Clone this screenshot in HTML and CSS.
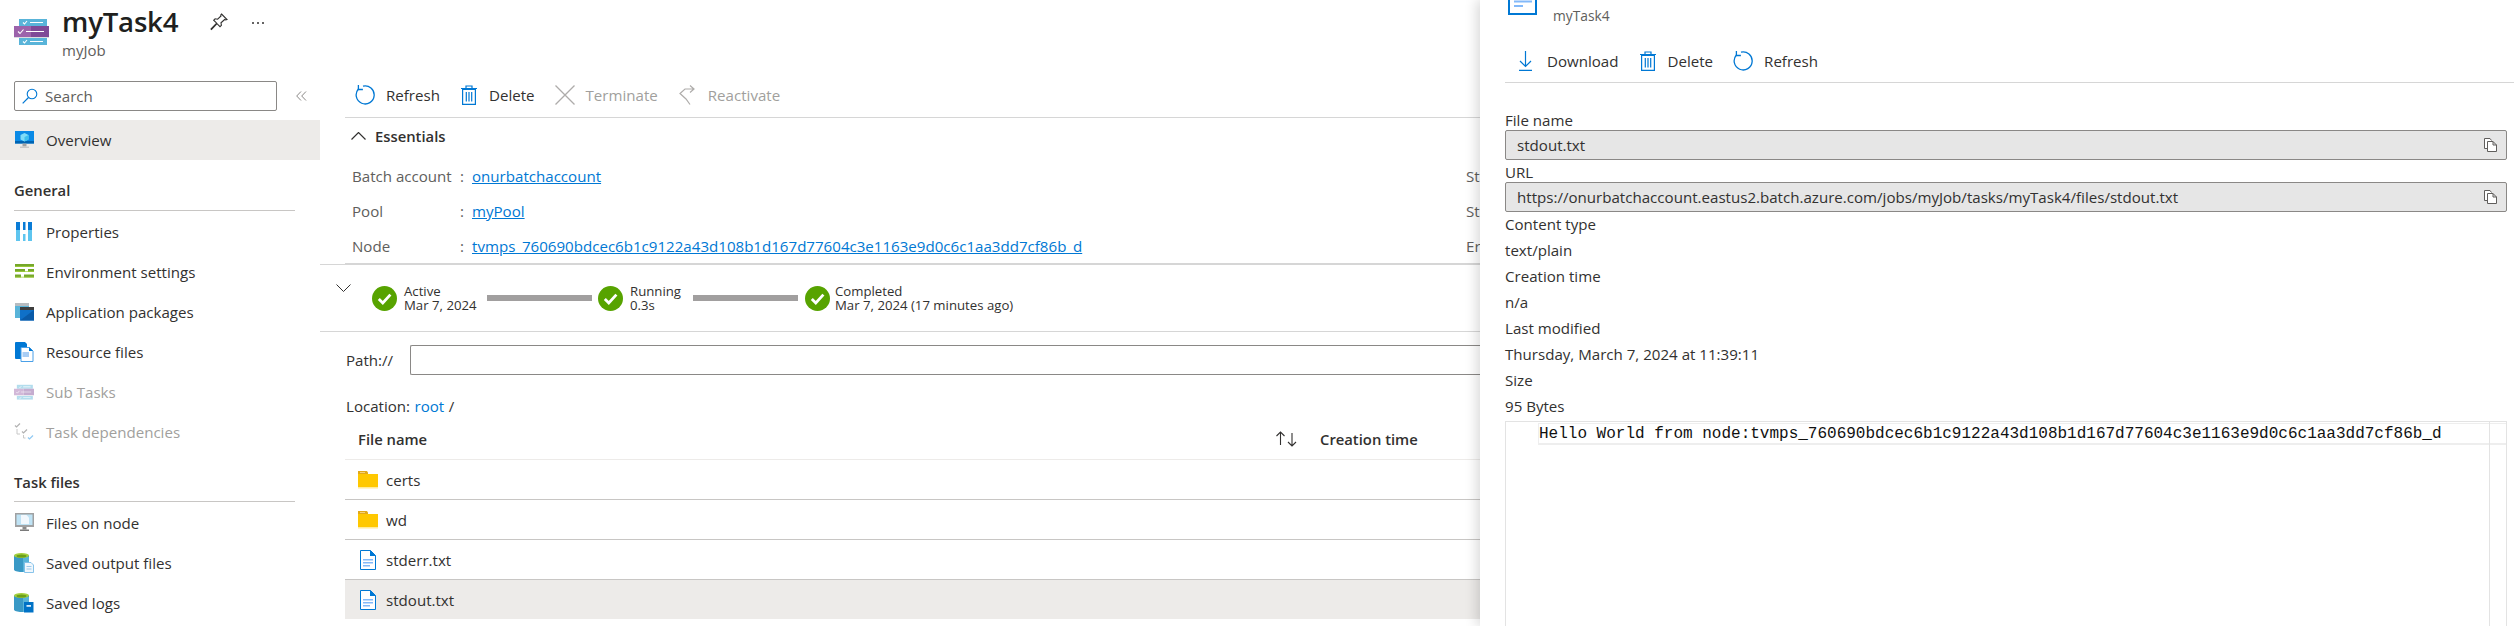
FILE: index.html
```html
<!DOCTYPE html>
<html lang="en">
<head>
<meta charset="utf-8">
<title>myTask4</title>
<link rel="stylesheet" href="styles.css">
</head>
<body>
<svg class="defs" width="0" height="0" aria-hidden="true">
  <defs>
    <symbol id="i-refresh" viewBox="0 0 20 20"><path d="M8 1.200A9 9 0 1 1 3.400 4" fill="none" stroke="#0078d4" stroke-width="1.300"/><path d="M3.400 0v4.500h4.500" fill="none" stroke="#0078d4" stroke-width="1.300"/></symbol>
    <symbol id="i-trash" viewBox="0 0 16 20"><path d="M1.600 4.500h12.800V19.400H1.600zM0 3.500h16M5 3.300V1h6v2.300M5.300 7v9.500M8 7v9.500M10.700 7v9.500" fill="none" stroke="#0078d4" stroke-width="1.200"/></symbol>
    <symbol id="i-check" viewBox="0 0 25 25"><circle cx="12.500" cy="12.500" r="12.500" fill="#57a300"/><path d="M6.800 13l4 4 7.600-8.400" fill="none" stroke="#fff" stroke-width="2.800"/></symbol>
    <symbol id="i-folder" viewBox="0 0 20 18"><path d="M0 1h8.500l1.500 2h10v13.600H0z" fill="#ffc800"/><path d="M0 0h8.800l1.200 1.200V3H0z" fill="#e2a91a"/><path d="M2 1h5v1H2z" fill="#f4d27a"/><path d="M0 16.600h20V18H0z" fill="#fff4c8"/></symbol>
    <symbol id="i-doc" viewBox="0 0 16 20"><path d="M.5.500h10l5 5v14H.5z" fill="#fff" stroke="#0078d4"/><path d="M10 0l6 6h-6z" fill="#0078d4"/><path d="M3 9h10v1.600H3zM3 12h10v1.600H3zM3 15h7v1.600H3z" fill="#83b9f9"/></symbol>
    <symbol id="i-task" viewBox="0 0 35 27"><path d="M5 1h28v7H5zM5 20h28v7H5z" fill="#59b4d9"/><path d="M0 8h17v11H0z" fill="#9c63ab"/><path d="M17 8h18v11H17z" fill="#7f4a97"/><path d="M0 19h35v1H0z" fill="#dcdce0"/><path d="M9 4.500l1.500 1.500 2.500-3M9 23.500l1.500 1.500 2.500-3M4 13.500l2 2 3.500-4" fill="none" stroke="#fff" stroke-width="1.100"/><path d="M16 4h13v1H16zM16 23h13v1H16zM12 13h18v1H12z" fill="#fff"/></symbol>
    <symbol id="i-copy" viewBox="0 0 14 14"><path d="M3.500 10.500H.5V.5h5.500l1.500 2M3.500 3.500H9l3.500 3.500v6.500h-9zM9 3.500V7h3.500" fill="#fff" stroke="#605e5c"/></symbol>
    <symbol id="i-can" viewBox="0 0 15 19"><path d="M0 2.500h15V16.500c0 1.400-3.400 2.500-7.500 2.500S0 17.900 0 16.500z" fill="#3999c6"/><path d="M9 4h6v12.500c0 1.400-2.700 2.500-6 2.500z" fill="#59b4d9"/><ellipse cx="7.500" cy="2.500" rx="7.500" ry="2.500" fill="#a4cf3e"/><ellipse cx="7.500" cy="3" rx="5" ry="1.500" fill="#6ca01a"/></symbol>
  </defs>
</svg>

<div class="blade">
  <header class="head">
    <svg class="head-logo" width="35" height="27"><use href="#i-task"/></svg>
    <div class="head-titles">
      <h1 class="title">myTask4</h1>
      <div class="subtitle">myJob</div>
    </div>
    <svg class="pin" width="18" height="18" viewBox="0 0 18 18"><path d="M11.500 1l5.500 5.500-1.300.5-1-.5-3.700 3.300.4 2.500-1.400 1.400-3-3L1.500 16.500 1 16l5.700-5.800-3-3 1.400-1.400 2.500.4L11 3l-.3-1z" fill="none" stroke="#323130" stroke-width="1.100"/></svg>
    <div class="more"><i></i><i></i><i></i></div>
  </header>

  <div class="columns">
    <nav class="nav">
      <div class="search-row">
        <div class="search">
          <svg width="16" height="16" viewBox="0 0 16 16"><circle cx="10" cy="6" r="4.800" fill="none" stroke="#0078d4" stroke-width="1.100"/><path d="M6.500 9.500L.7 15.300" stroke="#0078d4" stroke-width="1.200"/></svg>
          <span>Search</span>
        </div>
        <svg class="collapse" width="11" height="10" viewBox="0 0 11 10"><path d="M5 .5L.7 5 5 9.500M10 .5L5.700 5l4.300 4.500" fill="none" stroke="#8a8886"/></svg>
      </div>

      <a class="nav-item is-selected">
        <svg width="20" height="20" viewBox="0 0 20 20"><path d="M1 1h19v12.500H1z" fill="#0a8ae6"/><path d="M1 11h19v2.500H1z" fill="#0063b1"/><path d="M10.500 3l4 2v4.500l-4 2-4-2V5z" fill="#7fdcf8"/><path d="M10.500 7v4.500l4-2V5z" fill="#3ec0ee"/><path d="M8.500 13.500h4v3h-4z" fill="#a0a1a2"/><path d="M6 16.500h9V18H6z" fill="#c8c8c8"/></svg>
        <span>Overview</span>
      </a>

      <h2 class="nav-heading">General</h2>
      <ul class="nav-list">
        <li><a class="nav-item">
          <svg width="20" height="20" viewBox="0 0 20 20"><path d="M2 0h4v8H2zM9 0h2.500v8H9zM14 0h4v8h-4z" fill="#0a7cd6"/><path d="M2 8h4v11H2zM9 12h2.500v7H9zM14 8h4v11h-4z" fill="#5ec5ef"/><path d="M9 8h2.500v4H9z" fill="#fff"/></svg>
          <span>Properties</span></a></li>
        <li><a class="nav-item">
          <svg width="20" height="20" viewBox="0 0 20 20"><path d="M1 2h19v3H1zM1 7h10v3H1zM14 7h6v3h-6zM1 12.500h6v3H1zM10 12.500h10v3H10z" fill="#76a82a"/><path d="M1 4.300h19V5H1zM1 9.300h19v.7H1zM1 14.800h19v.7H1z" fill="#a4cf3e"/></svg>
          <span>Environment settings</span></a></li>
        <li><a class="nav-item">
          <svg width="20" height="20" viewBox="0 0 20 20"><path d="M1 1h14v3H1z" fill="#b7bcc0"/><path d="M1 4h14v12H1z" fill="#59b4d9"/><path d="M6 5h14v3H6z" fill="#3e3e3e"/><path d="M6 8h14v10.500H6z" fill="#0f70c8"/><path d="M6 18.500L20 8v10.500z" fill="#0a5aa8"/></svg>
          <span>Application packages</span></a></li>
        <li><a class="nav-item">
          <svg width="20" height="20" viewBox="0 0 20 20"><path d="M2 0h9l2 2v15H2a1 1 0 0 1-1-1V1a1 1 0 0 1 1-1z" fill="#0078d4"/><path d="M7 5.500h8.500l3.500 3.500v10.500H7z" fill="#fff" stroke="#4aa0e8"/><path d="M8.500 10h6.500v5H8.500z" fill="#a8cdf4"/><path d="M15 5l4 4h-4z" fill="#0078d4"/></svg>
          <span>Resource files</span></a></li>
        <li><a class="nav-item is-disabled">
          <svg class="faded" width="20" height="20" viewBox="0 0 35 35"><use href="#i-task" width="35" height="27" y="4"/></svg>
          <span>Sub Tasks</span></a></li>
        <li><a class="nav-item is-disabled">
          <svg class="faded" width="20" height="20" viewBox="0 0 20 20"><path d="M1 3.500l1.500 1.500L6 1.500" fill="none" stroke="#555" stroke-width="1.200"/><path d="M8 9.500l1.500 1.500L13 7.500" fill="none" stroke="#555" stroke-width="1.200"/><path d="M14 15.500l1.500 1.500L19 13.500" fill="none" stroke="#0a8ae6" stroke-width="1.200"/><path d="M3 7v5h3M9.500 13v3h2" fill="none" stroke="#888"/></svg>
          <span>Task dependencies</span></a></li>
      </ul>

      <h2 class="nav-heading nav-heading-b">Task files</h2>
      <ul class="nav-list">
        <li><a class="nav-item">
          <svg width="20" height="20" viewBox="0 0 20 20"><path d="M1 0h19v14H1z" fill="#a0a1a2"/><path d="M2.500 1.500h16V12h-16z" fill="#bfe3f5"/><path d="M7 2h5.500l2.500 2.500V11H7z" fill="#f2f8fd"/><path d="M8.500 14h4v2.500h-4z" fill="#8a8a8a"/><path d="M6 16.500h9V18H6z" fill="#7a7a7a"/></svg>
          <span>Files on node</span></a></li>
        <li><a class="nav-item">
          <svg width="20" height="20" viewBox="0 0 20 20"><use href="#i-can" width="15" height="19"/><path d="M10.500 9.500h6.500l2.500 2.500v7.500h-9z" fill="#f0f7fd" stroke="#7cbde8" stroke-width=".9"/><path d="M12.500 13.500h5M12.500 16h5" stroke="#9cc9ea"/></svg>
          <span>Saved output files</span></a></li>
        <li><a class="nav-item">
          <svg width="20" height="20" viewBox="0 0 20 20"><use href="#i-can" width="15" height="19"/><path d="M10 9h9.500v10.500H10z" fill="#0072c6"/><path d="M12.500 12h4.500v1.800h-4.500z" fill="#d6ecfb"/></svg>
          <span>Saved logs</span></a></li>
      </ul>
    </nav>

    <main class="main">
      <div class="toolbar">
        <button class="tool"><svg width="20" height="20"><use href="#i-refresh"/></svg><span>Refresh</span></button>
        <button class="tool tool-del"><svg width="16" height="20"><use href="#i-trash"/></svg><span>Delete</span></button>
        <button class="tool is-off"><svg width="20" height="20" viewBox="0 0 20 20"><path d="M.5.500l19 19M19.500.500l-19 19" stroke="#aeacaa" stroke-width="1.300"/></svg><span>Terminate</span></button>
        <button class="tool is-off"><svg width="18" height="20" viewBox="0 0 18 20"><path d="M11 .5l4 3.500-4 3.500M15 4H6L1 8.500 7 14l4 5.500" fill="none" stroke="#aeacaa" stroke-width="1.200"/></svg><span>Reactivate</span></button>
      </div>

      <section class="essentials">
        <div class="ess-head">
          <svg width="15" height="8" viewBox="0 0 15 8"><path d="M.5 7.500l7-7 7 7" fill="none" stroke="#323130" stroke-width="1.200"/></svg>
          <span>Essentials</span>
        </div>
        <div class="ess-grid">
          <dl class="ess-col">
            <dt>Batch account</dt><dd><b>:</b><a>onurbatchaccount</a></dd>
            <dt>Pool</dt><dd><b>:</b><a>myPool</a></dd>
            <dt>Node</dt><dd><b>:</b><a>tvmps_760690bdcec6b1c9122a43d108b1d167d77604c3e1163e9d0c6c1aa3dd7cf86b_d</a></dd>
          </dl>
          <div class="ess-right">
            <span>Start time</span>
            <span>State</span>
            <span>Error</span>
          </div>
        </div>
      </section>

      <section class="stages">
        <svg class="stage-caret" width="15" height="8" viewBox="0 0 15 8"><path d="M.5.500l7 7 7-7" fill="none" stroke="#323130"/></svg>
        <div class="stage stage-a"><svg width="25" height="25"><use href="#i-check"/></svg><div><div>Active</div><div>Mar 7, 2024</div></div></div>
        <div class="stage-bar"></div>
        <div class="stage stage-b"><svg width="25" height="25"><use href="#i-check"/></svg><div><div>Running</div><div>0.3s</div></div></div>
        <div class="stage-bar"></div>
        <div class="stage stage-c"><svg width="25" height="25"><use href="#i-check"/></svg><div><div>Completed</div><div>Mar 7, 2024 (17 minutes ago)</div></div></div>
      </section>

      <div class="path-row">
        <label>Path://</label>
        <div class="path-input"></div>
      </div>
      <div class="location">Location: <a>root</a> /</div>

      <div class="table">
        <div class="t-head">
          <span class="t-name">File name</span>
          <svg class="t-sort" width="22" height="16" viewBox="0 0 22 16"><path d="M4.500 14V1M.5 5l4-4 4 4M16 2v13M12 11l4 4 4-4" fill="none" stroke="#323130" stroke-width="1.100"/></svg>
          <span class="t-created">Creation time</span>
        </div>
        <div class="t-row"><svg width="20" height="18"><use href="#i-folder"/></svg><span>certs</span></div>
        <div class="t-row"><svg width="20" height="18"><use href="#i-folder"/></svg><span>wd</span></div>
        <div class="t-row"><svg class="t-doc" width="16" height="20"><use href="#i-doc"/></svg><span>stderr.txt</span></div>
        <div class="t-row is-selected"><svg class="t-doc" width="16" height="20"><use href="#i-doc"/></svg><span>stdout.txt</span></div>
      </div>
    </main>
  </div>
</div>

<aside class="panel">
  <div class="p-head">
    <svg class="p-icon" width="29" height="15" viewBox="0 0 29 15"><path d="M1 -6h27v20H1z" fill="#fff" stroke="#0078d4" stroke-width="2"/><path d="M6 .5h18v2H6zM6 5h9v2H6z" fill="#83b9f9"/></svg>
    <span>myTask4</span>
  </div>
  <div class="p-toolbar">
    <button class="tool tool-dl"><svg width="13" height="20" viewBox="0 0 13 20"><path d="M6.500 0v15M1 10l5.500 5.500L12 10M0 19.300h13" fill="none" stroke="#0078d4" stroke-width="1.200"/></svg><span>Download</span></button>
    <button class="tool tool-del"><svg width="16" height="20"><use href="#i-trash"/></svg><span>Delete</span></button>
    <button class="tool"><svg width="20" height="20"><use href="#i-refresh"/></svg><span>Refresh</span></button>
  </div>
  <div class="p-label p-first">File name</div>
  <div class="p-input"><span>stdout.txt</span><svg width="14" height="14"><use href="#i-copy"/></svg></div>
  <div class="p-label p-url">URL</div>
  <div class="p-input"><span>https://onurbatchaccount.eastus2.batch.azure.com/jobs/myJob/tasks/myTask4/files/stdout.txt</span><svg width="14" height="14"><use href="#i-copy"/></svg></div>
  <div class="p-label p-meta">Content type</div>
  <div class="p-label p-meta">text/plain</div>
  <div class="p-label p-meta">Creation time</div>
  <div class="p-label p-meta">n/a</div>
  <div class="p-label p-meta">Last modified</div>
  <div class="p-label p-meta">Thursday, March 7, 2024 at 11:39:11</div>
  <div class="p-label p-meta">Size</div>
  <div class="p-label p-meta">95 Bytes</div>
  <div class="editor">
    <div class="ed-line">Hello World from node:tvmps_760690bdcec6b1c9122a43d108b1d167d77604c3e1163e9d0c6c1aa3dd7cf86b_d</div>
    <div class="ed-rail"></div>
  </div>
</aside>
</body>
</html>
```
FILE: styles.css
```css
* { box-sizing: border-box; }
html, body { margin: 0; height: 100%; }
body {
  width: 2514px;
  height: 626px;
  overflow: hidden;
  position: relative;
  background: #fff;
  color: #323130;
  font-family: "Open Sans", "Noto Sans", sans-serif;
  font-size: 15.1px;
}
.defs { position: absolute; }
svg { display: block; flex: none; }
a { color: inherit; text-decoration: none; }
ul { list-style: none; margin: 0; padding: 0; }
h1, h2, dl, dd { margin: 0; }

.blade { width: 1480px; height: 626px; overflow: hidden; }
.head { height: 70px; display: flex; align-items: flex-start; padding-left: 14px; }
.head-logo { margin-top: 18px; }
.head-titles { margin-left: 13px; }
.title { font-size: 27.6px; font-weight: 600; line-height: 36px; margin-top: 3px; color: #201f1e; letter-spacing: -.2px; }
.subtitle { font-size: 15px; line-height: 18px; margin-top: 2px; color: #605e5c; }
.pin { margin: 13px 0 0 32px; }
.more { display: flex; gap: 3px; margin: 22px 0 0 24px; }
.more i { width: 2px; height: 2px; background: #323130; border-radius: 50%; }

.columns { display: flex; height: 556px; }
.nav { width: 320px; flex: none; padding-top: 11px; }
.search-row { display: flex; align-items: center; padding-left: 14px; height: 30px; margin-bottom: 9px; }
.search { width: 263px; height: 30px; border: 1px solid #8a8886; border-radius: 2px; display: flex; align-items: center; padding-left: 7px; gap: 7px; color: #605e5c; }
.collapse { margin-left: 19px; }
.nav-item { display: flex; align-items: center; height: 40px; padding-left: 14px; gap: 12px; }
.nav-item.is-selected { background: #edebe9; }
.nav-item.is-disabled { color: #a19f9d; }
.faded { opacity: .45; }
.nav-heading { font-size: 14.800px; font-weight: 600; height: 51px; line-height: 19px; padding-top: 21px; margin: 0 25px 1px 14px; border-bottom: 1px solid #c8c6c4; }
.nav-heading-b { height: 50px; }

.main { width: 1160px; flex: none; padding-left: 25px; overflow: hidden; }
.toolbar { height: 48px; border-bottom: 1px solid #d6d6d6; display: flex; align-items: center; padding: 3px 0 0 10px; }
.tool { display: flex; align-items: center; gap: 11px; padding: 0; border: 0; background: none; color: inherit; font: inherit; margin-right: 21px; }
.tool-del { gap: 12px; margin-right: 20px; }
.tool.is-off { color: #a19f9d; }
.essentials { height: 147px; border-bottom: 2px solid #d6d6d6; }
.ess-head { display: flex; align-items: center; gap: 9px; height: 36px; padding-left: 6px; font-weight: 600; font-size: 14.800px; }
.ess-grid { display: flex; padding: 4px 0 0 7px; }
.ess-col { width: 1114px; flex: none; display: grid; grid-template-columns: 108px 1fr; grid-auto-rows: 35px; align-items: center; color: #605e5c; }
.ess-col dd { display: flex; gap: 9px; }
.ess-col b { font-weight: 400; width: 3px; }
.ess-col a { color: #0078d4; text-decoration: underline; }
.ess-right { display: grid; grid-auto-rows: 35px; align-items: center; color: #605e5c; white-space: nowrap; }

.stages { margin: -1px 0 0 -25px; height: 68px; border-top: 1px solid #d6d6d6; border-bottom: 1px solid #d6d6d6; display: flex; align-items: center; position: relative; font-size: 13.200px; line-height: 14px; }
.stage-caret { position: absolute; left: 16px; top: 19px; }
.stage { display: flex; align-items: center; gap: 7px; flex: none; }
.stage-a { margin-left: 52px; width: 115px; }
.stage-b { margin-left: 6px; width: 95px; }
.stage-c { margin-left: 7px; gap: 5px; white-space: nowrap; }
.stage-bar { width: 105px; height: 6px; background: #a19f9f; flex: none; }

.path-row { display: flex; align-items: center; margin-top: 13px; height: 30px; }
.path-row label { width: 65px; flex: none; padding-left: 1px; }
.path-input { flex: 1; height: 30px; border: 1px solid #8a8886; border-right: 0; border-radius: 2px 0 0 2px; }
.location { margin-top: 21px; line-height: 20px; padding-left: 1px; word-spacing: .5px; }
.location a { color: #0078d4; }
.table { margin-top: 4px; }
.t-head { display: flex; align-items: center; padding: 0 0 1px 13px; border-bottom: 1px solid #edebe9; font-weight: 600; font-size: 14.800px; height: 40px; }
.t-name { width: 918px; flex: none; }
.t-sort { margin-right: 22px; }
.t-row { height: 40px; border-bottom: 1px solid #c8c6c4; display: flex; align-items: center; padding-left: 13px; gap: 8px; }
.t-doc { margin: 0 2px; }
.t-row.is-selected { background: #edebe9; border-bottom: 0; height: 39px; }

.panel { position: absolute; left: 1480px; top: 0; width: 1034px; height: 626px; background: #fff; box-shadow: -3px 0 12px rgba(0,0,0,.16); padding: 0 7px 0 25px; }
.p-head { height: 35px; display: flex; align-items: flex-start; font-size: 13.800px; color: #605e5c; padding-left: 3px; }
.p-head span { margin: 7px 0 0 16px; line-height: 18px; }
.p-toolbar { height: 48px; margin-right: -7px; border-bottom: 1px solid #d6d6d6; display: flex; align-items: center; padding: 4px 0 0 14px; }
.tool-dl { gap: 15px; }
.p-label { line-height: 20px; height: 20px; }
.p-first { margin-top: 27px; }
.p-url { margin-top: 2px; }
.p-meta { margin-bottom: 6px; }
.p-input + .p-meta { margin-top: 2px; }
.p-input { height: 30px; border: 1px solid #8a8886; border-radius: 2px; background: #e6e6e6; display: flex; align-items: center; justify-content: space-between; padding: 0 8px 0 11px; }
.editor { position: relative; height: 205px; margin-top: -1px; border: 1px solid #e3e3e3; border-bottom: 0; padding: 1px 0 0 32px; font-family: "Liberation Mono", monospace; font-size: 16px; color: #111; }
.ed-line { height: 22px; line-height: 20px; border: 2px solid #eeeeee; border-width: 1px 0 2px 1px; white-space: pre; }
.ed-rail { position: absolute; top: 0; right: 0; bottom: 0; width: 17px; border-left: 1px solid #e3e3e3; }
```
